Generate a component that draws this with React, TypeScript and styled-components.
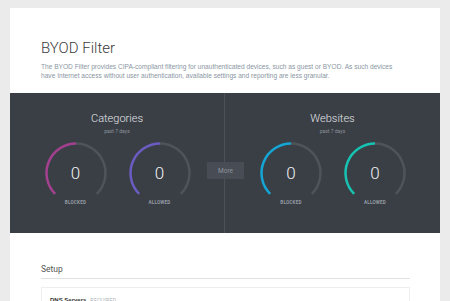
import React from "react";
import styled, { createGlobalStyle } from "styled-components";

const Global = createGlobalStyle`
  html, body { margin: 0; padding: 0; background: #ebebeb; }
  body { font-family: "Liberation Sans", Arial, sans-serif; }
  * { box-sizing: border-box; }
`;

const Page = styled.div`
  padding: 8px 10px 0 10px;
  height: 301px;
  overflow: hidden;
`;

const Card = styled.div`
  background: #fff;
  min-height: 400px;
`;

const Header = styled.div`
  padding: 30px 31px 13px 31px;
`;

const Title = styled.h1`
  margin: 0;
  font-family: Roboto, sans-serif;
  font-weight: 300;
  font-size: 15px;
  line-height: 20px;
  color: #3a3a3a;
`;

const Desc = styled.p`
  margin: 4px 0 0 0;
  font-size: 6.6px;
  line-height: 9px;
  color: #8a96a3;
  max-width: 366px;
`;

const Dark = styled.div`
  position: relative;
  background: #3a3f46;
  height: 140px;
  display: grid;
  grid-template-columns: 215px 1fr;
`;

const Section = styled.div<{ $divider?: boolean }>`
  display: flex;
  flex-direction: column;
  align-items: center;
  padding-top: 19px;
  border-right: ${(p) => (p.$divider ? "1px solid #4c5159" : "none")};
`;

const SecTitle = styled.div`
  font-family: Roboto, sans-serif;
  font-weight: 300;
  font-size: 11px;
  line-height: 13px;
  color: #e4e6e9;
`;

const SecSub = styled.div`
  margin-top: 3px;
  font-family: Roboto, sans-serif;
  font-size: 5px;
  line-height: 7px;
  color: #8a919a;
`;

const GaugeRow = styled.div`
  margin-top: 6px;
  display: flex;
  gap: 20px;
  padding-left: 1px;
`;

const GaugeBox = styled.div`
  position: relative;
  width: 64px;
  display: flex;
  flex-direction: column;
  align-items: center;
`;

const Num = styled.div`
  position: absolute;
  left: 0;
  right: 0;
  top: 20px;
  text-align: center;
  font-family: Roboto, sans-serif;
  font-weight: 300;
  font-size: 17px;
  line-height: 24px;
  color: #eef0f2;
`;

const GLabel = styled.div`
  margin-top: 2px;
  font-family: Roboto, sans-serif;
  font-weight: 700;
  font-size: 4.6px;
  line-height: 7px;
  letter-spacing: 0.2px;
  color: #959ba3;
`;

const MoreBtn = styled.div`
  position: absolute;
  left: 197px;
  top: 69px;
  width: 37px;
  height: 17px;
  background: #484d55;
  color: #8e949c;
  font-family: Roboto, sans-serif;
  font-size: 6.5px;
  display: flex;
  align-items: center;
  justify-content: center;
`;

const Setup = styled.div`
  padding: 30px 30px 0 31px;
`;

const SetupTitle = styled.div`
  font-family: Roboto, sans-serif;
  font-size: 8.5px;
  line-height: 12px;
  color: #555;
  padding-bottom: 3px;
  border-bottom: 1px solid #dfe1e3;
`;

const Box = styled.div`
  margin-top: 8px;
  border: 1px solid #eceef0;
  padding: 9px 8px;
  display: flex;
  align-items: baseline;
  gap: 4px;
`;

const BoxLabel = styled.span`
  font-size: 6px;
  font-weight: 700;
  color: #333;
`;

const Req = styled.span`
  font-size: 4.6px;
  color: #a9aeb4;
  letter-spacing: 0.2px;
`;

const C = 32;
const R = 29.5;
const pt = (deg: number) => {
  const a = (deg * Math.PI) / 180;
  return [C + R * Math.sin(a), C - R * Math.cos(a)];
};

function Gauge({ color, label }: { color: string; label: string }) {
  const [sx, sy] = pt(225);
  const [ex, ey] = pt(135);
  return (
    <GaugeBox>
      <svg width="64" height="56" viewBox="0 0 64 56">
        <path
          d={`M ${C} ${C - R} A ${R} ${R} 0 0 1 ${ex} ${ey}`}
          fill="none"
          stroke="#4f535a"
          strokeWidth="2.5"
        />
        <path
          d={`M ${sx} ${sy} A ${R} ${R} 0 0 1 ${C} ${C - R}`}
          fill="none"
          stroke={color}
          strokeWidth="2.5"
        />
      </svg>
      <Num>0</Num>
      <GLabel>{label}</GLabel>
    </GaugeBox>
  );
}

export default function App() {
  return (
    <>
      <Global />
      <Page>
        <Card>
          <Header>
            <Title>BYOD Filter</Title>
            <Desc>
              The BYOD Filter provides CIPA-compliant filtering for unauthenticated devices, such as guest or BYOD. As such devices have Internet access without user authentication, available settings and reporting are less granular.
            </Desc>
          </Header>
          <Dark>
            <Section $divider>
              <SecTitle>Categories</SecTitle>
              <SecSub>past 7 days</SecSub>
              <GaugeRow>
                <Gauge color="#a3408f" label="BLOCKED" />
                <Gauge color="#6b5cc2" label="ALLOWED" />
              </GaugeRow>
            </Section>
            <Section>
              <SecTitle>Websites</SecTitle>
              <SecSub>past 7 days</SecSub>
              <GaugeRow>
                <Gauge color="#15a5d5" label="BLOCKED" />
                <Gauge color="#17c2b2" label="ALLOWED" />
              </GaugeRow>
            </Section>
            <MoreBtn>More</MoreBtn>
          </Dark>
          <Setup>
            <SetupTitle>Setup</SetupTitle>
            <Box>
              <BoxLabel>DNS Servers</BoxLabel>
              <Req>REQUIRED</Req>
            </Box>
          </Setup>
        </Card>
      </Page>
    </>
  );
}
